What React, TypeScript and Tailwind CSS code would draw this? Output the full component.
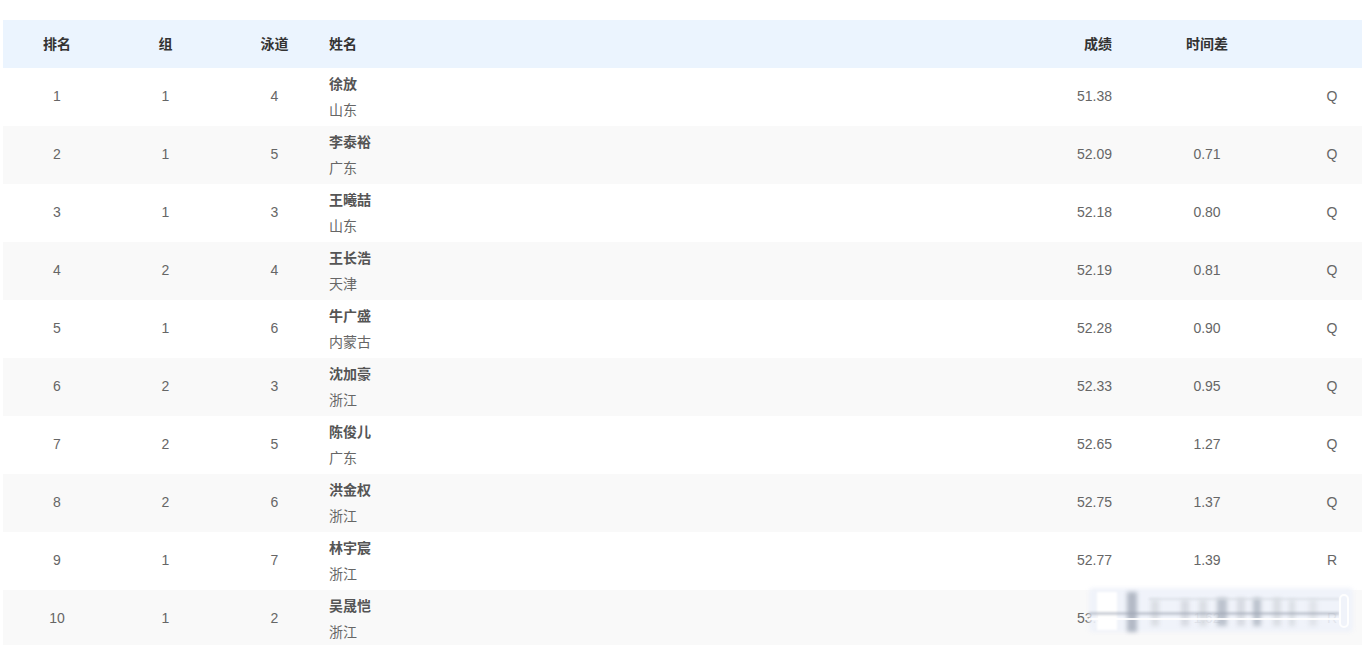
const rows = [
  { rank: 1, group: 1, lane: 4, name: '徐放', team: '山东', score: '51.38', diff: '', mark: 'Q' },
  { rank: 2, group: 1, lane: 5, name: '李泰裕', team: '广东', score: '52.09', diff: '0.71', mark: 'Q' },
  { rank: 3, group: 1, lane: 3, name: '王曦喆', team: '山东', score: '52.18', diff: '0.80', mark: 'Q' },
  { rank: 4, group: 2, lane: 4, name: '王长浩', team: '天津', score: '52.19', diff: '0.81', mark: 'Q' },
  { rank: 5, group: 1, lane: 6, name: '牛广盛', team: '内蒙古', score: '52.28', diff: '0.90', mark: 'Q' },
  { rank: 6, group: 2, lane: 3, name: '沈加豪', team: '浙江', score: '52.33', diff: '0.95', mark: 'Q' },
  { rank: 7, group: 2, lane: 5, name: '陈俊儿', team: '广东', score: '52.65', diff: '1.27', mark: 'Q' },
  { rank: 8, group: 2, lane: 6, name: '洪金权', team: '浙江', score: '52.75', diff: '1.37', mark: 'Q' },
  { rank: 9, group: 1, lane: 7, name: '林宇宸', team: '浙江', score: '52.77', diff: '1.39', mark: 'R' },
  { rank: 10, group: 1, lane: 2, name: '吴晟恺', team: '浙江', score: '53.00', diff: '1.62', mark: 'R' },
]

// blurry site watermark sitting over the last row
function Watermark() {
  const bars: [number, number, number, number, string][] = [
    [38, 10, 4, 40, 'bg-gray-400/70'],
    [62, 8, 12, 26, 'bg-gray-300/70'],
    [92, 8, 12, 26, 'bg-gray-300/80'],
    [110, 8, 12, 26, 'bg-gray-300/70'],
    [128, 10, 10, 28, 'bg-gray-400/60'],
    [148, 8, 10, 28, 'bg-gray-300/80'],
    [164, 8, 10, 28, 'bg-gray-400/60'],
    [184, 8, 10, 28, 'bg-gray-300/70'],
    [200, 6, 12, 26, 'bg-gray-300/70'],
    [220, 8, 12, 26, 'bg-gray-300/50'],
  ]
  return (
    <div className="pointer-events-none absolute left-[1086px] top-[568px] h-[44px] w-[264px]">
      <div className="absolute inset-0 rounded bg-[#eef2f9]/90 blur-[2px]" />
      <div className="absolute left-[8px] top-[4px] h-[38px] w-[20px] bg-white blur-[1px]" />
      {bars.map(([l, w, t, h, c], i) => (
        <div key={i} className={`absolute blur-[2px] ${c}`} style={{ left: l, width: w, top: t, height: h }} />
      ))}
      <div className="absolute left-0 top-[24px] h-[3px] w-[250px] bg-gray-400/50 blur-[1px]" />
      <div className="absolute left-0 top-[30px] h-[2px] w-[250px] bg-white/90 blur-[0.5px]" />
      <div className="absolute left-[60px] top-[10px] h-[2px] w-[190px] bg-gray-300/60 blur-[1px]" />
      <div className="absolute right-[4px] top-[6px] h-[34px] w-[10px] rounded-full border-2 border-white/90" />
    </div>
  )
}

export default function App() {
  return (
    <div
      className="min-h-[645px] bg-white pt-[20px] pl-[3px] pr-[6px] text-[14px]"
      style={{ fontFamily: '"Liberation Sans", Arial, "Noto Sans CJK SC", sans-serif' }}
    >
      <div className="relative overflow-hidden">
        <div className="flex h-[48px] items-center bg-[#ebf4fe] font-bold text-[#333]">
          <div className="w-[108px] text-center">排名</div>
          <div className="w-[109px] text-center">组</div>
          <div className="w-[109px] text-center">泳道</div>
          <div className="flex-1">姓名</div>
          <div className="w-[120px] text-right">成绩</div>
          <div className="w-[190px] text-center">时间差</div>
          <div className="w-[60px]" />
        </div>
        {rows.map((r, i) => (
          <div
            key={r.rank}
            className={`flex h-[58px] items-center text-[#666] ${i % 2 === 1 ? 'bg-[#f9f9f9]' : 'bg-white'}`}
          >
            <div className="w-[108px] pb-[2px] text-center">{r.rank}</div>
            <div className="w-[109px] pb-[2px] text-center">{r.group}</div>
            <div className="w-[109px] pb-[2px] text-center">{r.lane}</div>
            <div className="flex flex-1 flex-col leading-[26px]">
              <span className="font-bold text-[#555]">{r.name}</span>
              <span>{r.team}</span>
            </div>
            <div className="w-[120px] pb-[2px] text-right">{r.score}</div>
            <div className="w-[190px] pb-[2px] text-center">{r.diff}</div>
            <div className="w-[60px] pb-[2px] text-center">{r.mark}</div>
          </div>
        ))}
        <Watermark />
      </div>
    </div>
  )
}
